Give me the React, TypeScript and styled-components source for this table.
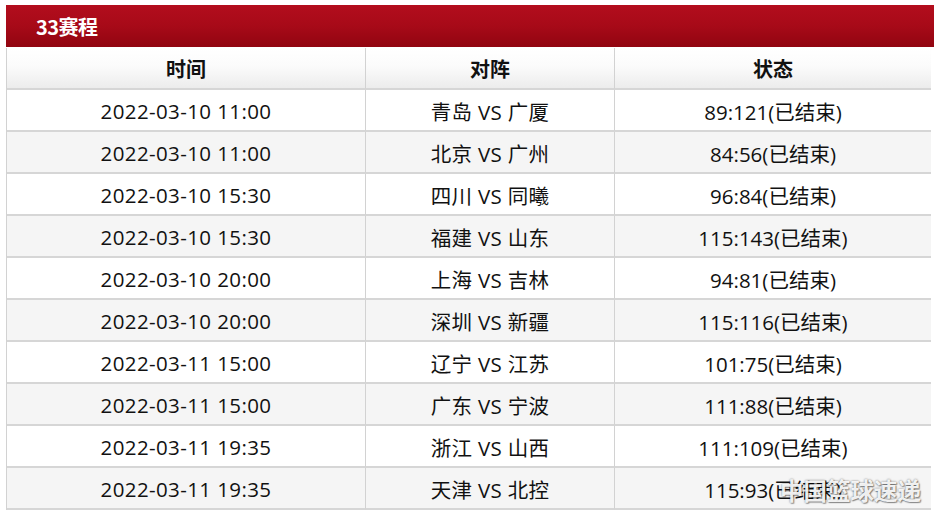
import React from "react";
import styled, { createGlobalStyle } from "styled-components";

const Global = createGlobalStyle`
  html, body { margin: 0; padding: 0; background: #ffffff; }
  body { font-family: "Open Sans", "Noto Sans CJK SC", sans-serif; }
`;

const Page = styled.div`
  position: relative;
  width: 934px;
  height: 516px;
  padding: 5px 0 0 6px;
  box-sizing: border-box;
  overflow: hidden;
`;

const TitleBar = styled.div`
  height: 42px;
  width: 928px;
  background: linear-gradient(to bottom, #b30d1d 0%, #a70a18 50%, #910510 100%);
  display: flex;
  align-items: center;
  padding-left: 30px;
  box-sizing: border-box;
  color: #ffffff;
  font-family: "Noto Sans CJK SC", sans-serif;
  font-weight: 700;
  font-size: 20px;
  letter-spacing: -0.5px;
`;

const Table = styled.div`
  display: grid;
  grid-template-columns: 359px 249px 316px;
  width: 925px;
  border-left: 1px solid #d2d2d2;
  border-right: 1px solid #d2d2d2;
  margin-top: 1px;
  box-sizing: border-box;
`;

const Cell = styled.div<{ $head?: boolean; $alt?: boolean; $last?: boolean; $spacing?: number }>`
  height: 42px;
  display: flex;
  align-items: center;
  justify-content: center;
  box-sizing: border-box;
  padding-top: 1px;
  border-bottom: 2px solid #d6d6d6;
  border-right: ${(p) => (p.$last ? "none" : "1px solid #d2d2d2")};
  font-size: ${(p) => (p.$head ? "20px" : "20.5px")};
  letter-spacing: ${(p) => (p.$spacing ?? 0)}px;
  color: #111111;
  font-weight: ${(p) => (p.$head ? 700 : 400)};
  font-family: ${(p) =>
    p.$head ? `"Noto Sans CJK SC", sans-serif` : `"Open Sans", "Noto Sans CJK SC", sans-serif`};
  background: ${(p) =>
    p.$head
      ? "linear-gradient(to bottom, #ffffff 0%, #fbfbfb 45%, #ececec 100%)"
      : p.$alt
      ? "#f5f5f5"
      : "#ffffff"};
`;

const Watermark = styled.div`
  position: absolute;
  left: 780px;
  top: 473px;
  font-family: "Noto Sans CJK SC", sans-serif;
  font-size: 23.5px;
  font-weight: 700;
  color: rgba(255, 255, 255, 0.92);
  text-shadow: 0 0 2px rgba(0, 0, 0, 0.55), 1px 1px 1px rgba(0, 0, 0, 0.35);
`;

const rows: [string, string, string][] = [
  ["2022-03-10 11:00", "青岛 VS 广厦", "89:121(已结束)"],
  ["2022-03-10 11:00", "北京 VS 广州", "84:56(已结束)"],
  ["2022-03-10 15:30", "四川 VS 同曦", "96:84(已结束)"],
  ["2022-03-10 15:30", "福建 VS 山东", "115:143(已结束)"],
  ["2022-03-10 20:00", "上海 VS 吉林", "94:81(已结束)"],
  ["2022-03-10 20:00", "深圳 VS 新疆", "115:116(已结束)"],
  ["2022-03-11 15:00", "辽宁 VS 江苏", "101:75(已结束)"],
  ["2022-03-11 15:00", "广东 VS 宁波", "111:88(已结束)"],
  ["2022-03-11 19:35", "浙江 VS 山西", "111:109(已结束)"],
  ["2022-03-11 19:35", "天津 VS 北控", "115:93(已结束)"],
];

export default function App() {
  return (
    <>
      <Global />
      <Page>
        <TitleBar>33赛程</TitleBar>
        <Table>
          <Cell $head>时间</Cell>
          <Cell $head>对阵</Cell>
          <Cell $head $last>状态</Cell>
          {rows.map((r, i) => (
            <React.Fragment key={i}>
              <Cell $alt={i % 2 === 1} $spacing={0.4}>{r[0]}</Cell>
              <Cell $alt={i % 2 === 1} $spacing={0.3}>{r[1]}</Cell>
              <Cell $alt={i % 2 === 1} $last>{r[2]}</Cell>
            </React.Fragment>
          ))}
        </Table>
        <Watermark>中国篮球速递</Watermark>
      </Page>
    </>
  );
}
